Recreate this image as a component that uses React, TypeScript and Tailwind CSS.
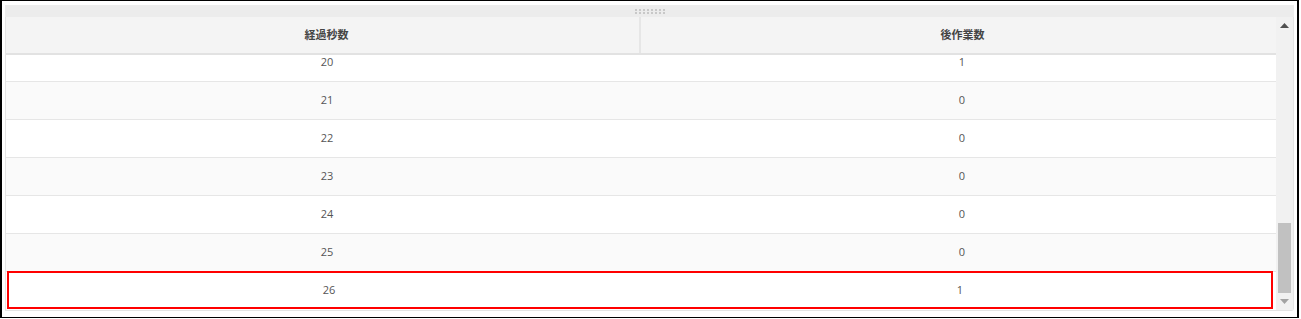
const rows = [
  { sec: 20, count: 1 },
  { sec: 21, count: 0 },
  { sec: 22, count: 0 },
  { sec: 23, count: 0 },
  { sec: 24, count: 0 },
  { sec: 25, count: 0 },
  { sec: 26, count: 1 },
];

const font = { fontFamily: '"Open Sans", "Noto Sans CJK JP", sans-serif' };

export default function App() {
  return (
    <div className="w-[1301px] h-[319px] bg-white" style={font}>
      <div className="w-[1299px] h-[318px] border-y border-x-2 border-black px-[3px] pt-[4px]">
        <div className="w-full flex flex-col">
          <div className="h-[12px] bg-[#ececec] flex items-center justify-center">
            <div className="grid grid-cols-8 gap-x-[2px] gap-y-[1px]">
              {Array.from({ length: 16 }).map((_, i) => (
                <div key={i} className="w-[2px] h-[2px] bg-[#c8c8c8]" />
              ))}
            </div>
          </div>
          <div className="flex h-[294px] border-l border-b border-r border-[#e4e4e4] rounded-br-[3px]">
            <div className="flex-1 flex flex-col overflow-hidden">
              <div className="h-[38px] shrink-0 flex bg-[#f4f4f4] border-b-2 border-[#e2e2e2] text-[11px] text-[#444] font-semibold">
                <div className="w-[635px] pl-[8px] flex items-center justify-center border-r-2 border-[#e6e6e6]">経過秒数</div>
                <div className="flex-1 pl-[8px] flex items-center justify-center">後作業数</div>
              </div>
              <div className="flex-1 overflow-hidden">
                <div className="-mt-[11px]">
                  {rows.map((r, i) => {
                    const selected = r.sec === 26;
                    return (
                      <div
                        key={r.sec}
                        className={
                          "h-[38px] flex text-[11px] text-[#555] " +
                          (i % 2 === 1 ? "bg-[#fafafa] " : "bg-white ") +
                          (selected ? "" : "border-b border-[#e6e6e6]")
                        }
                      >
                        <div
                          className={
                            "flex-1 flex " +
                            (selected ? "ml-[1px] mr-[3px] border-2 border-[#ff0000] -mt-px mb-px" : "")
                          }
                        >
                          <div className={(selected ? "w-[632px]" : "w-[634px]") + " pl-[8px] flex items-center justify-center"}>{r.sec}</div>
                          <div className="flex-1 pl-[8px] flex items-center justify-center">{r.count}</div>
                        </div>
                      </div>
                    );
                  })}
                </div>
              </div>
            </div>
            <div className="w-[17px] bg-[#f1f1f1] flex flex-col items-center">
              <div className="h-[16px] flex items-center justify-center">
                <svg width="9" height="6" viewBox="0 0 9 6">
                  <path d="M0 6 L4.5 1 L9 6 Z" fill="#505050" />
                </svg>
              </div>
              <div className="flex-1 w-full flex flex-col justify-end px-[2px]">
                <div className="h-[70px] bg-[#c1c1c1]" />
              </div>
              <div className="h-[17px] flex items-center justify-center">
                <svg width="9" height="6" viewBox="0 0 9 6">
                  <path d="M0 0 L4.5 5 L9 0 Z" fill="#a3a3a3" />
                </svg>
              </div>
            </div>
          </div>
        </div>
      </div>
    </div>
  );
}
